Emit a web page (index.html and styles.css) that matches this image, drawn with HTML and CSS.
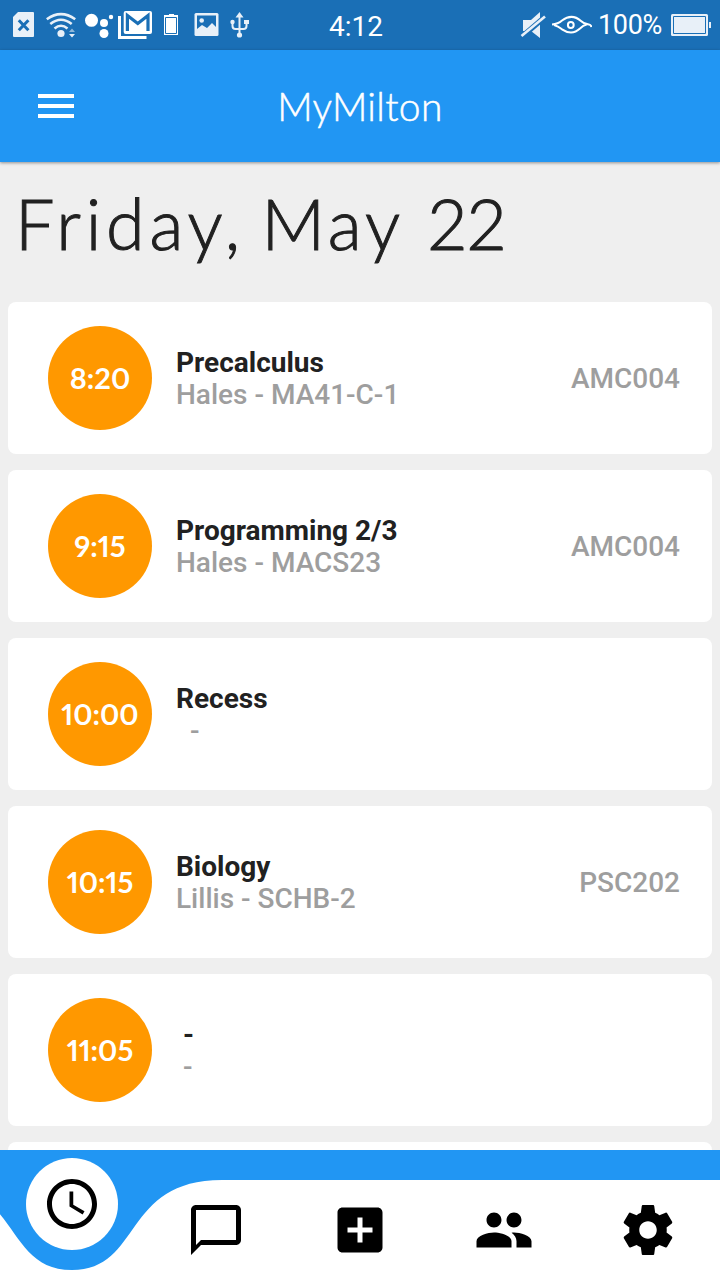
FILE: index.html
```html
<!DOCTYPE html>
<html lang="en">
<head>
<meta charset="utf-8">
<title>MyMilton</title>
<link rel="stylesheet" href="styles.css">
</head>
<body>
<div class="app">
  <div class="status">
    <svg class="status-icons" width="260" height="50" viewBox="0 0 260 50">
      <path fill="#e8f0f8" fill-rule="evenodd" d="M18 12H33q1 0 1 1V36q0 1-1 1H14q-1 0-1-1V17z"/>
      <path stroke="#1a6fb6" stroke-width="3" d="M18.800 20.300l9.600 10M28.400 20.300l-9.600 10"/>
      <g fill="none" stroke="#e8f0f8" stroke-width="2.600">
        <path d="M46.800 19.200Q61 9 75.200 19.200"/><path d="M50.300 24Q61 15.500 71.700 24"/><path d="M54.500 28.500Q61 23 67.500 28.500"/>
      </g>
      <circle cx="61" cy="33.500" r="3.600" fill="#e8f0f8"/>
      <path fill="#8db7da" d="M69 32l3-3.500 3 3.500z"/><path fill="#e8f0f8" d="M69 34l3 3.500 3-3.500z"/>
      <g fill="#fff"><circle cx="91.500" cy="20.300" r="6.500"/><circle cx="104" cy="23" r="4"/><circle cx="104" cy="33.500" r="4.500"/><circle cx="111" cy="17" r="2.200"/></g>
      <path fill="none" stroke="#fff" stroke-width="3" d="M119.500 16V37.500H146.500"/>
      <rect x="123.700" y="11" width="28.300" height="23" rx="2" fill="#fff"/>
      <path fill="none" stroke="#1a6fb6" stroke-width="3.200" d="M127.400 31V15.500L137.800 23.500 148 15.500V31"/>
      <path fill="#fff" d="M169 14h5v1h4v20h-14V15h5z"/>
      <path fill="none" stroke="#1a6fb6" d="M165.500 17.500h11v16h-11z"/>
      <path fill="#e8f0f8" d="M196 13h21q1.500 0 1.500 1.500v20q0 1.500-1.500 1.500h-21q-1.500 0-1.500-1.500v-20q0-1.500 1.500-1.500z"/>
      <path fill="#1a6fb6" d="M197 15.500h19v11.500l-4-4-5 5-5-3-5 4z"/><circle cx="201.700" cy="20.500" r="2.300" fill="#e8f0f8"/>
      <path fill="none" stroke="#e8f0f8" stroke-width="2" d="M239.500 15v20M232.500 22v4q0 3 3 3h8q3 0 3-3v-4"/>
      <path fill="#e8f0f8" d="M235.500 17.500l4-5.500 4 5.500zM244 20h5v4h-5z"/><circle cx="232.500" cy="22" r="2.200" fill="#e8f0f8"/><circle cx="239.500" cy="35" r="2.600" fill="#e8f0f8"/>
    </svg>
    <span class="clock">4:12</span>
    <div class="status-right">
      <svg width="72" height="50" viewBox="520 0 72 50">
        <path fill="#e8f0f8" d="M523 20h8l9-8v26l-9-7h-8z"/>
        <path stroke="#1a6fb6" stroke-width="5.500" d="M521 37.500L546 16"/>
        <path stroke="#e8f0f8" stroke-width="2.600" d="M521.500 36L545 16.500"/>
        <path fill="none" stroke="#fff" stroke-width="2" d="M552 24.500Q558 24 562 20.500Q572 13 581 21Q584 24 588 24.300Q591 24.500 591.500 27M554 25Q558 26 562 29.300Q572 36 580 28.500Q583 25.500 587 24.300"/>
        <circle cx="570.800" cy="25" r="2.900" fill="none" stroke="#fff" stroke-width="2"/>
      </svg>
      <span class="percent">100%</span>
      <svg width="40" height="50" viewBox="671 0 40 50">
        <rect x="671" y="14" width="37" height="22" rx="1.500" fill="#e8f0f8"/>
        <path fill="none" stroke="#1a6fb6" d="M673.500 16.500h32v17h-32z"/>
        <path fill="#e8f0f8" d="M709 22h2v6h-2z"/>
      </svg>
    </div>
  </div>
  <header class="bar">
    <div class="menu"><i></i><i></i><i></i></div>
    <span class="brand">MyMilton</span>
  </header>
  <main class="content">
    <h1 class="date"><span class="weekday">Friday,</span> <span class="month">May</span> <span class="day">22</span></h1>
    <div class="list">
      <div class="card"><div class="time">8:20</div><div class="info"><b>Precalculus</b><span>Hales - MA41-C-1</span></div><div class="room">AMC004</div></div>
      <div class="card"><div class="time">9:15</div><div class="info"><b>Programming 2/3</b><span>Hales - MACS23</span></div><div class="room">AMC004</div></div>
      <div class="card"><div class="time">10:00</div><div class="info"><b>Recess</b><span>&nbsp; -</span></div></div>
      <div class="card"><div class="time">10:15</div><div class="info"><b>Biology</b><span>Lillis - SCHB-2</span></div><div class="room">PSC202</div></div>
      <div class="card"><div class="time">11:05</div><div class="info"><b>&nbsp;-</b><span>&nbsp;-</span></div></div>
      <div class="card"></div>
    </div>
  </main>
  <nav class="tabs">
    <svg class="wave" width="720" height="130" viewBox="0 0 720 130"><path fill="#2196f3" d="M-78 0H720V30H222C122 30 142 120 72 120S22 30-78 30z"/></svg>
    <div class="tab active"><div class="bubble"><svg class="icon" viewBox="0 0 24 24"><path d="M11.990 2C6.470 2 2 6.480 2 12s4.470 10 9.990 10C17.520 22 22 17.520 22 12S17.520 2 11.990 2zM12 20c-4.420 0-8-3.580-8-8s3.580-8 8-8 8 3.580 8 8-3.580 8-8 8zm.5-13H11v6l5.250 3.150.75-1.230-4.500-2.670z"/></svg></div></div>
    <div class="tab"><svg class="icon" viewBox="0 0 24 24"><path d="M20 2H4c-1.100 0-2 .9-2 2v18l4-4h14c1.100 0 2-.9 2-2V4c0-1.100-.9-2-2-2zm0 14H6l-2 2V4h16v12z"/></svg></div>
    <div class="tab"><svg class="icon" viewBox="0 0 24 24"><path d="M19 3H5c-1.110 0-2 .9-2 2v14c0 1.100.890 2 2 2h14c1.100 0 2-.9 2-2V5c0-1.100-.9-2-2-2zm-2 10h-4v4h-2v-4H7v-2h4V7h2v4h4v2z"/></svg></div>
    <div class="tab"><svg class="icon" viewBox="0 0 24 24"><path d="M16 11c1.660 0 2.990-1.340 2.990-3S17.660 5 16 5c-1.660 0-3 1.340-3 3s1.340 3 3 3zm-8 0c1.660 0 2.990-1.340 2.990-3S9.660 5 8 5C6.340 5 5 6.340 5 8s1.340 3 3 3zm0 2c-2.330 0-7 1.170-7 3.500V19h14v-2.500c0-2.330-4.670-3.500-7-3.500zm8 0c-.290 0-.620.020-.970.050 1.160.840 1.970 1.970 1.970 3.450V19h6v-2.500c0-2.330-4.670-3.500-7-3.500z"/></svg></div>
    <div class="tab"><svg class="icon" viewBox="0 0 24 24"><path d="M19.430 12.980c.040-.320.070-.640.070-.980s-.030-.660-.070-.980l2.110-1.650c.190-.150.240-.420.120-.640l-2-3.460c-.120-.220-.390-.300-.610-.220l-2.490 1c-.520-.400-1.080-.730-1.690-.980l-.380-2.650C14.460 2.180 14.250 2 14 2h-4c-.250 0-.460.180-.490.420l-.380 2.650c-.610.250-1.170.590-1.690.980l-2.490-1c-.230-.090-.490 0-.610.220l-2 3.460c-.130.220-.070.490.120.640l2.110 1.650c-.040.320-.070.650-.070.980s.030.660.070.980l-2.110 1.650c-.190.150-.240.420-.120.640l2 3.460c.120.220.390.300.610.220l2.490-1c.520.400 1.080.730 1.690.980l.380 2.650c.030.240.240.420.490.420h4c.250 0 .460-.180.490-.420l.380-2.650c.610-.250 1.170-.590 1.690-.980l2.490 1c.230.090.490 0 .610-.220l2-3.460c.120-.220.070-.490-.120-.640l-2.110-1.650zM12 15.500c-1.930 0-3.500-1.570-3.500-3.500s1.570-3.500 3.500-3.500 3.500 1.570 3.500 3.500-1.570 3.500-3.500 3.500z"/></svg></div>
  </nav>
</div>
</body>
</html>
```
FILE: styles.css
```css
* { box-sizing: border-box; }
body { margin: 0; font-family: Roboto, "Liberation Sans", sans-serif; }
.app { width: 720px; height: 1280px; display: flex; flex-direction: column; overflow: hidden; background: #efefef; }
.status { height: 50px; flex: none; background: #1a6fb6; color: #fff; display: grid; grid-template-columns: 260px 1fr 200px; align-items: center; font-size: 28px; }
.status svg { display: block; flex: none; }
.clock { padding: 3px 0 0 69px; line-height: 33px; }
.status-right { display: flex; align-items: center; }
.percent { width: 79px; padding-left: 6px; font-size: 27px; line-height: 50px; height: 50px; letter-spacing: -.3px; }
.bar { height: 112px; flex: none; background: #2196f3; color: #fff; display: grid; grid-template-columns: 240px 240px 240px; align-items: center; box-shadow: 0 1px 3px rgba(0,0,0,.4); z-index: 1; }
.menu { padding-left: 38px; display: flex; flex-direction: column; gap: 6px; }
.menu i { width: 36px; height: 4px; background: #fff; }
.brand { text-align: center; font-family: Lato, sans-serif; font-weight: 300; font-size: 39px; letter-spacing: .3px; line-height: 50px; -webkit-text-stroke: .5px #fff; }
.content { height: 988px; flex: none; overflow: hidden; }
.date { margin: 0; padding: 16px 0 0 15px; height: 140px; font-family: Lato, sans-serif; font-weight: 300; font-size: 70px; line-height: 90px; letter-spacing: 2.500px; color: #212121; white-space: nowrap; -webkit-text-stroke: 1px #212121; }
.weekday { letter-spacing: 4.800px; }
.month { letter-spacing: 4px; margin-left: -5px; }
.day { letter-spacing: -1.500px; margin-left: 1.500px; }
.list { display: flex; flex-direction: column; gap: 16px; padding: 0 8px; }
.card { height: 152px; background: #fff; border-radius: 8px; display: flex; align-items: center; padding: 0 32px 0 40px; flex: none; }
.time { width: 104px; height: 104px; border-radius: 50%; background: #ff9800; color: #fff; font: bold 29px/104px Lato, sans-serif; font-feature-settings: "pnum"; text-align: center; }
.info { flex: 1; margin-left: 24px; padding-top: 2px; display: flex; flex-direction: column; font-size: 28px; line-height: 32px; font-weight: 500; color: #9e9e9e; white-space: nowrap; }
.info b { font-weight: 700; color: #212121; }
.room { font-size: 28px; font-weight: 500; color: #9e9e9e; }
.tabs { position: relative; height: 130px; flex: none; background: #fff; display: grid; grid-template-columns: repeat(5, 144px); padding-top: 30px; }
.wave { position: absolute; left: 0; top: 0; }
.tab { position: relative; display: flex; align-items: center; justify-content: center; height: 100px; }
.active { margin-top: -26px; }
.bubble { width: 92px; height: 92px; border-radius: 50%; background: #fff; display: flex; align-items: center; justify-content: center; }
.icon { width: 60px; height: 60px; display: block; }
```
